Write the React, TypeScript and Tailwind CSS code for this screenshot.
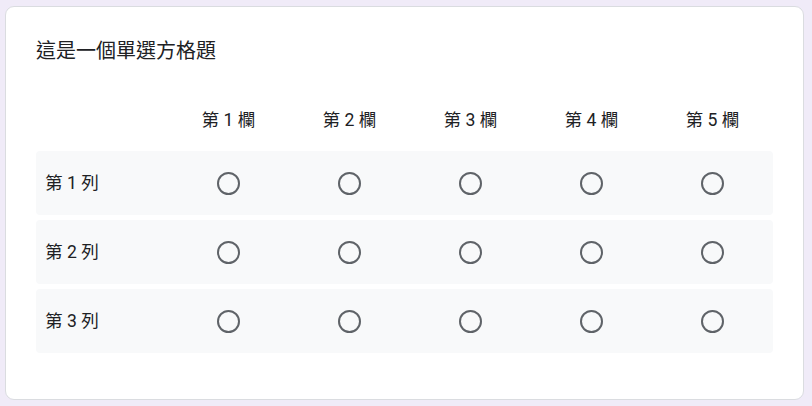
import React from "react";

const cols = ["第 1 欄", "第 2 欄", "第 3 欄", "第 4 欄", "第 5 欄"];
const rows = ["第 1 列", "第 2 列", "第 3 列"];

function Radio() {
  return (
    <div className="flex items-center justify-center">
      <div className="w-[23px] h-[23px] rounded-full border-2 border-[#5f6368]" />
    </div>
  );
}

export default function App() {
  return (
    <div
      className="w-[812px] h-[406px] bg-[#f0ebf8] pl-[5px] pt-[6px] pr-[8px] pb-[6px] flex"
      style={{ fontFamily: 'Roboto, "Noto Sans CJK TC", sans-serif' }}
    >
      <div className="flex-1 bg-white rounded-[9px] border border-[#dadce0] pl-[30px] pr-[30px] pt-[30px] text-[#202124]">
        <div className="text-[20px] leading-[28px]">這是一個單選方格題</div>
        <div className="mt-[23px] grid grid-cols-[132px_repeat(5,121px)] h-[63px] items-center">
          <div />
          {cols.map((c) => (
            <div key={c} className="text-center text-[17.6px] leading-[24px]">
              {c}
            </div>
          ))}
        </div>
        <div className="flex flex-col gap-[5px]">
          {rows.map((r) => (
            <div
              key={r}
              className="grid grid-cols-[132px_repeat(5,121px)] h-[64px] items-center bg-[#f8f9fa] rounded-[4px]"
            >
              <div className="pl-[9px] text-[17.6px] leading-[24px]">{r}</div>
              {cols.map((c) => (
                <Radio key={c} />
              ))}
            </div>
          ))}
        </div>
      </div>
    </div>
  );
}
